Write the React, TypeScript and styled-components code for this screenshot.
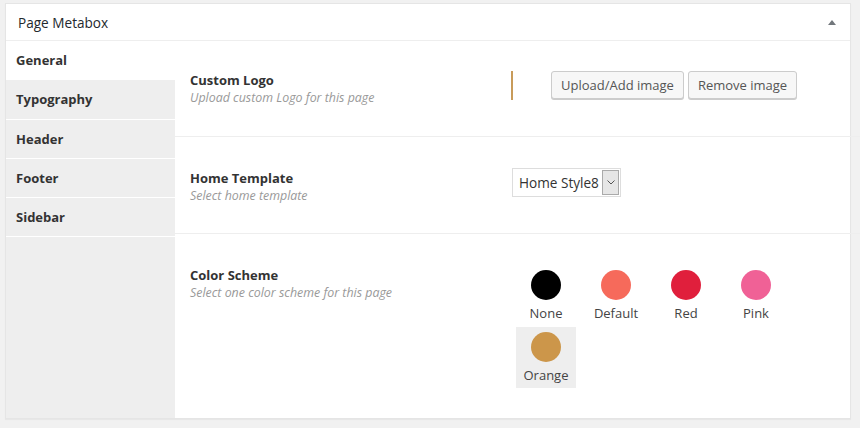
import React from "react";
import styled, { createGlobalStyle } from "styled-components";

const Global = createGlobalStyle`
  html, body { margin: 0; padding: 0; background: #f1f1f1; }
  body { font-family: "Open Sans", "Noto Sans", sans-serif; font-size: 13px; color: #444; }
  * { box-sizing: border-box; }
`;

const Page = styled.div`
  padding: 3px 9px 10px 5px;
`;

const Box = styled.div`
  width: 846px;
  height: 416px;
  background: #fff;
  border: 1px solid #e5e5e5;
  box-shadow: 0 1px 1px rgba(0, 0, 0, 0.04);
  display: flex;
  flex-direction: column;
`;

const Header = styled.div`
  height: 37px;
  flex: none;
  display: flex;
  align-items: center;
  justify-content: space-between;
  padding: 0 14px 0 12px;
  border-bottom: 1px solid #eee;
`;

const Title = styled.h2`
  margin: 0;
  font-size: 13.6px;
  font-weight: 400;
  color: #23282d;
`;

const Caret = styled.span`
  width: 0;
  height: 0;
  border-left: 4px solid transparent;
  border-right: 4px solid transparent;
  border-bottom: 5px solid #72777c;
`;

const Body = styled.div`
  flex: 1;
  display: flex;
  min-height: 0;
`;

const Tabs = styled.ul`
  margin: 0;
  padding: 0;
  list-style: none;
  width: 169px;
  flex: none;
  background: #eee;
`;

const Tab = styled.li<{ $active?: boolean }>`
  height: 39.3px;
  display: flex;
  align-items: center;
  padding-left: 10px;
  font-weight: 700;
  font-size: 13px;
  color: #333;
  background: ${(p) => (p.$active ? "#fff" : "transparent")};
  border-bottom: 1px solid #fff;
`;

const Content = styled.div`
  flex: 1;
  display: flex;
  flex-direction: column;
`;

const Row = styled.div<{ $pt: number; $h?: number }>`
  display: grid;
  grid-template-columns: 321px 1fr;
  padding: ${(p) => p.$pt}px 15px 0 15px;
  ${(p) => (p.$h ? `height: ${p.$h}px;` : "flex: 1;")}
  border-bottom: ${(p) => (p.$h ? "1px solid #eee" : "none")};
`;

const Label = styled.div<{ $offset?: number }>`
  display: flex;
  flex-direction: column;
  padding-top: ${(p) => p.$offset ?? 0}px;
`;

const FieldTitle = styled.div`
  font-weight: 700;
  font-size: 13px;
  line-height: 18px;
  color: #333;
`;

const Desc = styled.div`
  font-style: italic;
  font-size: 12.4px;
  line-height: 18px;
  color: #999;
`;

const Controls = styled.div`
  display: flex;
  align-items: flex-start;
`;

const Preview = styled.div`
  width: 2px;
  height: 29px;
  background: #c89b5a;
  margin-right: 38px;
`;

const Button = styled.button`
  height: 28px;
  padding: 0 9px;
  margin-right: 4px;
  font-family: inherit;
  font-size: 13px;
  color: #555;
  background: #f7f7f7;
  border: 1px solid #ccc;
  border-radius: 3px;
  box-shadow: 0 1px 0 #ccc;
`;

const Select = styled.div`
  margin-left: 1px;
  width: 109px;
  height: 29px;
  border: 1px solid #ddd;
  background: #fff;
  display: flex;
  align-items: center;
  justify-content: space-between;
  padding: 1px 1px 1px 6px;
  font-size: 13.6px;
  color: #333;
`;

const SelectArrow = styled.span`
  width: 17px;
  height: 100%;
  background: #e6e6e6;
  border: 1px solid #aaa;
  display: flex;
  align-items: center;
  justify-content: center;
`;

const Swatches = styled.div`
  display: flex;
  flex-wrap: wrap;
  width: 340px;
  margin-top: 0;
  row-gap: 1px;
`;

const Swatch = styled.div<{ $selected?: boolean }>`
  width: 60px;
  margin: 0 5px;
  padding: 5px 0 4px;
  display: flex;
  flex-direction: column;
  align-items: center;
  background: ${(p) => (p.$selected ? "#eee" : "transparent")};
`;

const Dot = styled.span<{ $color: string }>`
  width: 30px;
  height: 30px;
  border-radius: 50%;
  background: ${(p) => p.$color};
  margin-bottom: 4px;
`;

const SwatchName = styled.span`
  font-size: 13px;
  line-height: 18px;
  color: #444;
`;

const colors = [
  { name: "None", color: "#000000" },
  { name: "Default", color: "#f66a5b" },
  { name: "Red", color: "#e01f3c" },
  { name: "Pink", color: "#f06196" },
  { name: "Orange", color: "#cc964a", selected: true },
];

export default function App() {
  return (
    <Page>
      <Global />
      <Box>
        <Header>
          <Title>Page Metabox</Title>
          <Caret />
        </Header>
        <Body>
          <Tabs>
            <Tab $active>General</Tab>
            <Tab>Typography</Tab>
            <Tab>Header</Tab>
            <Tab>Footer</Tab>
            <Tab>Sidebar</Tab>
          </Tabs>
          <Content>
            <Row $pt={30} $h={96}>
              <Label>
                <FieldTitle>Custom Logo</FieldTitle>
                <Desc>Upload custom Logo for this page</Desc>
              </Label>
              <Controls>
                <Preview />
                <Button>Upload/Add image</Button>
                <Button>Remove image</Button>
              </Controls>
            </Row>
            <Row $pt={31} $h={97}>
              <Label $offset={1}>
                <FieldTitle>Home Template</FieldTitle>
                <Desc>Select home template</Desc>
              </Label>
              <Controls>
                <Select>
                  <span>Home Style8</span>
                  <SelectArrow>
                    <svg width="8" height="5" viewBox="0 0 8 5">
                      <path d="M0.5 0.5 L4 4 L7.5 0.5" fill="none" stroke="#555" strokeWidth="1" />
                    </svg>
                  </SelectArrow>
                </Select>
              </Controls>
            </Row>
            <Row $pt={31}>
              <Label $offset={1}>
                <FieldTitle>Color Scheme</FieldTitle>
                <Desc>Select one color scheme for this page</Desc>
              </Label>
              <Controls>
                <Swatches>
                  {colors.map((c) => (
                    <Swatch key={c.name} $selected={c.selected}>
                      <Dot $color={c.color} />
                      <SwatchName>{c.name}</SwatchName>
                    </Swatch>
                  ))}
                </Swatches>
              </Controls>
            </Row>
          </Content>
        </Body>
      </Box>
    </Page>
  );
}
